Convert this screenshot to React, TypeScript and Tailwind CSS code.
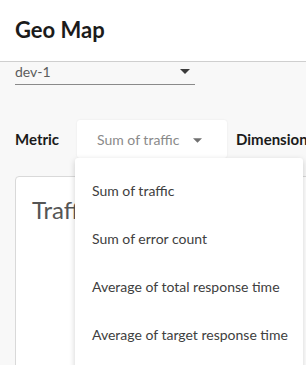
import React from 'react'

const metrics = [
  'Sum of traffic',
  'Sum of error count',
  'Average of total response time',
  'Average of target response time',
]

const Caret = ({ className }: { className?: string }) => (
  <svg viewBox="0 0 10 5" className={className} fill="currentColor">
    <path d="M0 0h10L5 5z" />
  </svg>
)

export default function App() {
  return (
    <div className="h-[365px] w-[306px] overflow-hidden bg-[#f8f8f8] font-['Lato','Liberation_Sans',sans-serif] text-[#1b1b1b]">
      <header className="h-[62px] bg-white border-b border-[#cfcfcf] px-[15px] pt-[16px]">
        <h1 className="text-[22px] font-bold leading-[28px]">Geo Map</h1>
      </header>

      <div className="px-[15px]">
        <div className="w-[180px] h-[23px] border-b border-[#8a8a8a] flex items-center justify-between pr-[5px]">
          <span className="text-[14px] text-[#5c5c5c] leading-[20px] -mt-[2px]">dev-1</span>
          <Caret className="w-[10px] h-[5px] text-[#3b3b3b] -mt-[4px]" />
        </div>

        <div className="mt-[35px] flex items-center h-[38px] whitespace-nowrap">
          <span className="shrink-0 text-[15px] font-bold w-[62px]">Metric</span>
          <div className="relative shrink-0">
            <div className="w-[150px] h-[38px] bg-white rounded-[3px] shadow-[0_0_2px_rgba(0,0,0,0.08)] flex items-center pl-[20px] pr-[25px] justify-between">
              <span className="text-[14px] text-[#8a8a8a]">Sum of traffic</span>
              <Caret className="w-[9px] h-[5px] text-[#707070] mt-[2px]" />
            </div>
            <div className="absolute left-[-2px] top-[38px] z-10 w-[228px] h-[220px] bg-white rounded-[3px] shadow-[0_2px_6px_rgba(0,0,0,0.18)] pt-[8px] pl-[1px]">
              {metrics.map((m) => (
                <div key={m} className="h-[48px] flex items-center pl-[16px] text-[14px] text-[#404040]">
                  {m}
                </div>
              ))}
            </div>
          </div>
          <span className="shrink-0 ml-[9px] text-[15px] font-bold">Dimension</span>
        </div>

        <div className="mt-[18px] w-[320px] h-[200px] bg-white border border-[#d9d9d9] rounded-[4px] pl-[16px] pt-[18px]">
          <span className="text-[24px] text-[#555] leading-[30px]">Traffic</span>
        </div>
      </div>
    </div>
  )
}
